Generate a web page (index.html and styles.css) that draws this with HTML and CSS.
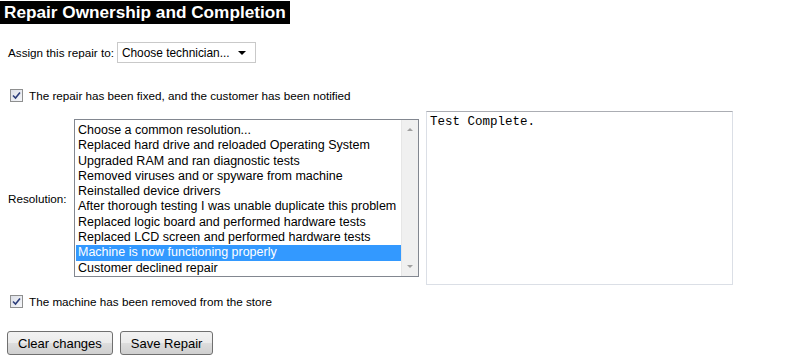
FILE: index.html
```html
<!DOCTYPE html>
<html lang="en">
<head>
  <meta charset="UTF-8" />
  <title>Repair Ownership and Completion</title>
  <link rel="stylesheet" href="styles.css">
</head>
<body>

<h1 class="title">Repair Ownership and Completion</h1>

<div class="assign">
  <label for="tech">Assign this repair to:</label>
  <span class="select-wrap">
    <select id="tech" class="select">
      <option>Choose technician...</option>
    </select>
  </span>
</div>

<label class="check-row fixed">
  <span class="check"><svg width="9" height="9" viewBox="0 0 9 9"><path d="M1 4.5 L3.5 7 L8 1.5" fill="none" stroke="#2c3d7a" stroke-width="1.6"/></svg></span>
  The repair has been fixed, and the customer has been notified
</label>

<div class="resolution">
  <span class="res-label">Resolution:</span>
  <div class="listbox">
    <ul class="options">
      <li>Choose a common resolution...</li>
      <li>Replaced hard drive and reloaded Operating System</li>
      <li>Upgraded RAM and ran diagnostic tests</li>
      <li>Removed viruses and or spyware from machine</li>
      <li>Reinstalled device drivers</li>
      <li>After thorough testing I was unable duplicate this problem</li>
      <li>Replaced logic board and performed hardware tests</li>
      <li>Replaced LCD screen and performed hardware tests</li>
      <li class="selected">Machine is now functioning properly</li>
      <li>Customer declined repair</li>
    </ul>
    <div class="scrollbar">
      <span class="arrow up"></span>
      <span class="arrow down"></span>
    </div>
  </div>
  <textarea class="notes">Test Complete.</textarea>
</div>

<label class="check-row removed">
  <span class="check"><svg width="9" height="9" viewBox="0 0 9 9"><path d="M1 4.5 L3.5 7 L8 1.5" fill="none" stroke="#2c3d7a" stroke-width="1.6"/></svg></span>
  The machine has been removed from the store
</label>

<div class="buttons">
  <button class="btn">Clear changes</button>
  <button class="btn">Save Repair</button>
</div>

</body>
</html>
```

FILE: styles.css
```css
body {
  margin: 0;
  font-family: Arial, "Liberation Sans", sans-serif;
  font-size: 11.7px;
  color: #000;
  background: #fff;
}

/* Heading bar */
.title {
  display: inline-block;
  margin: 1px 0 0 0;
  padding: 0 4px;
  height: 23px;
  line-height: 23px;
  background: #000;
  color: #fff;
  font-size: 17.2px;
  font-weight: bold;
}

/* Technician row */
.assign {
  display: flex;
  align-items: center;
  gap: 3px;
  margin: 18px 0 0 8px;
}

.select-wrap {
  position: relative;
  display: inline-block;
}

.select {
  appearance: none;
  -webkit-appearance: none;
  width: 139px;
  height: 21px;
  padding: 0 12px 0 4px;
  border: 1px solid #c9c9c9;
  border-radius: 0;
  background: #fff;
  font-family: Arial, "Liberation Sans", sans-serif;
  font-size: 11.9px;
  color: #000;
}

.select-wrap::after {
  content: "";
  position: absolute;
  right: 10px;
  top: 9px;
  border-left: 4px solid transparent;
  border-right: 4px solid transparent;
  border-top: 4px solid #000;
  pointer-events: none;
}

/* Checkboxes */
.check-row {
  display: flex;
  align-items: center;
  gap: 6px;
  margin-left: 10px;
}

.fixed {
  margin-top: 26px;
}

.removed {
  margin-top: 10px;
}

.check {
  display: inline-flex;
  align-items: center;
  justify-content: center;
  width: 11px;
  height: 11px;
  border: 1px solid #8e8f8f;
  background: linear-gradient(135deg, #dcdfe7, #f6f7fa);
}

/* Resolution row */
.resolution {
  display: flex;
  align-items: center;
  margin: 9px 0 0 8px;
}

.res-label {
  width: 66px;
}

.listbox {
  display: flex;
  width: 343px;
  height: 156px;
  border: 1px solid #828790;
  background: #fff;
}

.options {
  flex: 1;
  min-width: 0;
  overflow: hidden;
  list-style: none;
  margin: 0;
  padding: 3px 0 0 1px;
  font-size: 12.5px;
}

.options li {
  height: 15.3px;
  line-height: 15.3px;
  padding-left: 2px;
  white-space: nowrap;
}

.options li.selected {
  background: #3399ff;
  color: #fff;
}

.scrollbar {
  position: relative;
  flex-shrink: 0;
  width: 16px;
  background: #f0f0f0;
  border-left: 1px solid #e6e6e6;
}

.arrow {
  position: absolute;
  left: 5px;
  border-left: 3px solid transparent;
  border-right: 3px solid transparent;
}

.arrow.up {
  top: 8px;
  border-bottom: 3px solid #a0a0a0;
}

.arrow.down {
  bottom: 8px;
  border-top: 3px solid #a0a0a0;
}

.notes {
  width: 307px;
  height: 174px;
  margin-left: 7px;
  padding: 3px 3px;
  box-sizing: border-box;
  border: 1px solid #dbdfe6;
  border-top-color: #abadb3;
  resize: none;
  font-family: "Courier New", "Liberation Mono", monospace;
  font-size: 12.5px;
  color: #000;
}

/* Buttons */
.buttons {
  display: flex;
  gap: 7px;
  margin: 23px 0 0 7px;
}

.btn {
  height: 24px;
  padding: 0 10px;
  border: 1px solid #707070;
  border-radius: 3px;
  background: linear-gradient(#f2f2f2 0%, #ebebeb 50%, #dddddd 51%, #cfcfcf 100%);
  font-family: Arial, "Liberation Sans", sans-serif;
  font-size: 13px;
  color: #000;
}
```
